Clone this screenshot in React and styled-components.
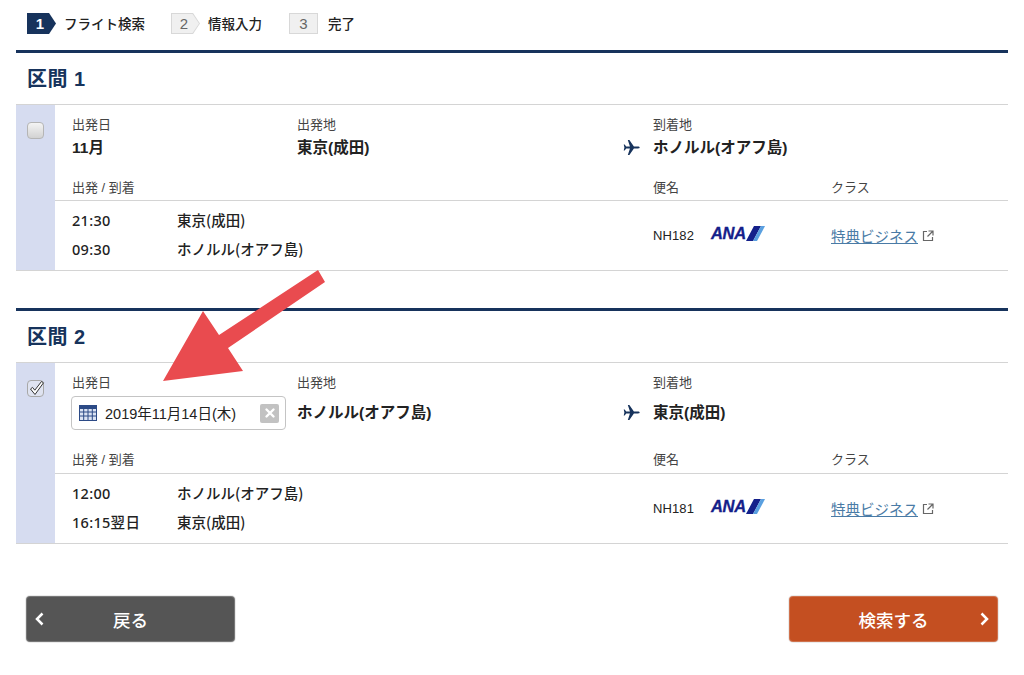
import React from 'react';
import styled, {createGlobalStyle} from 'styled-components';

const NAVY = '#17335c';

const GlobalStyle = createGlobalStyle`
    html, body {
        margin: 0;
        padding: 0;
        background: #fff;
    }
    body {
        font-family: "Liberation Sans", "Noto Sans CJK JP", sans-serif;
        color: #222;
    }
`;

const sections = [
    {
        id: 1,
        title: '区間 1',
        checked: false,
        origin: '東京(成田)',
        destination: 'ホノルル(オアフ島)',
        legs: [['21:30', '東京(成田)'], ['09:30', 'ホノルル(オアフ島)']],
        flight: 'NH182'
    },
    {
        id: 2,
        title: '区間 2',
        checked: true,
        origin: 'ホノルル(オアフ島)',
        destination: '東京(成田)',
        legs: [['12:00', 'ホノルル(オアフ島)'], ['16:15翌日', '東京(成田)']],
        flight: 'NH181'
    }
];

const PlaneIcon = () => (
    <PlaneSvg viewBox="0 0 24 24">
        <path d="M23.500 12c0-.9-1.200-1.300-2.200-1.300h-5.900L9 1.500H6.800l3 9.200H4.500L2.300 7.800H1L2 12l-1 4.200h1.300l2.200-2.900h5.300l-3 9.200H9l6.400-9.200h5.900c1 0 2.200-.4 2.200-1.300z"/>
    </PlaneSvg>
);

const AnaLogo = () => (
    <LogoWrap>
        <LogoText>ANA</LogoText>
        <svg width="19" height="15" viewBox="0 0 19 15">
            <polygon points="0,15 8,0 15,0 7,15" fill="#14208a"/>
            <polygon points="7,15 15,0 19,0 11,15" fill="#5aa0e0"/>
        </svg>
    </LogoWrap>
);

const ClassLink = () => (
    <LinkWrap>
        <FareLink>特典ビジネス</FareLink>
        <svg width="12" height="12" viewBox="0 0 12 12" fill="none" stroke="#666" strokeWidth="1.200">
            <path d="M5 1.500H1.500v9h9V7"/>
            <path d="M6.500 1H11v4.500M11 1L5.500 6.500"/>
        </svg>
    </LinkWrap>
);

const DateField = () => (
    <DateBox>
        <svg width="18" height="16" viewBox="0 0 18 16" fill="none" stroke="#2c4a86" strokeWidth="1">
            <rect x=".5" y=".5" width="17" height="15" fill="#dbe3f3"/>
            <rect x=".5" y=".5" width="17" height="3" fill="#2c4a86"/>
            <path d="M4.700 3v12M9 3v12M13.300 3v12M1 7h16M1 11h16"/>
        </svg>
        <DateText>2019年11月14日(木)</DateText>
        <ClearButton>
            <svg width="12" height="12" viewBox="0 0 12 12" stroke="#fff" strokeWidth="2.400" strokeLinecap="round">
                <path d="M2.500 2.500l7 7M9.500 2.500l-7 7"/>
            </svg>
        </ClearButton>
    </DateBox>
);

const Section = ({data}) => (
    <SectionRoot>
        <SectionTitle>{data.title}</SectionTitle>
        <Table>
            <CheckColumn>
                <CheckBox $checked={data.checked}>
                    {data.checked && (
                        <svg width="19" height="19" viewBox="0 0 19 19" fill="#fff" stroke="#333" strokeWidth="1">
                            <path d="M3.500 10l2-1.600 2.300 2.800L14.500 2.500l2 1.300L8 15.500z"/>
                        </svg>
                    )}
                </CheckBox>
            </CheckColumn>
            <Body>
                <SummaryGrid $tall={data.checked}>
                    <div>
                        <Label>出発日</Label>
                        {data.checked ? <DateField/> : <Value>11月</Value>}
                    </div>
                    <RouteCell>
                        <div>
                            <Label>出発地</Label>
                            <Value $tall={data.checked}>{data.origin}</Value>
                        </div>
                        <PlaneIcon/>
                    </RouteCell>
                    <div>
                        <Label>到着地</Label>
                        <Value $tall={data.checked}>{data.destination}</Value>
                    </div>
                </SummaryGrid>
                <HeaderGrid $tall={data.checked}>
                    <Label>出発 / 到着</Label>
                    <Label>便名</Label>
                    <Label>クラス</Label>
                </HeaderGrid>
                <DetailGrid>
                    <Legs>
                        {data.legs.map(([time, place]) => (
                            <Leg key={time}>
                                <LegTime>{time}</LegTime>
                                <span>{place}</span>
                            </Leg>
                        ))}
                    </Legs>
                    <Flight>
                        <span>{data.flight}</span>
                        <AnaLogo/>
                    </Flight>
                    <ClassLink/>
                </DetailGrid>
            </Body>
        </Table>
    </SectionRoot>
);

const App = () => (
    <Page>
        <GlobalStyle/>
        <Steps>
            <Step>
                <StepBadge $active>1</StepBadge>
                <StepLabel>フライト検索</StepLabel>
            </Step>
            <Step>
                <StepBadge>2</StepBadge>
                <StepLabel>情報入力</StepLabel>
            </Step>
            <Step>
                <StepBadge $last>3</StepBadge>
                <StepLabel>完了</StepLabel>
            </Step>
        </Steps>
        {sections.map(s => <Section key={s.id} data={s}/>)}
        <Actions>
            <ActionButton $color="#555555">
                <Chevron $left viewBox="0 0 10 14"><path d="M7.500 1.500L2 7l5.500 5.500"/></Chevron>
                戻る
            </ActionButton>
            <ActionButton $color="#c44f21">
                検索する
                <Chevron viewBox="0 0 10 14"><path d="M2.500 1.500L8 7l-5.500 5.500"/></Chevron>
            </ActionButton>
        </Actions>
        <ArrowOverlay width="1024" height="675" viewBox="0 0 1024 675">
            <polygon points="318,270 325,282 228,348 243,371 163,381 203,311 219,335" fill="#e94b4f"/>
        </ArrowOverlay>
    </Page>
);

export default App;

const Page = styled.div`
    position: relative;
    width: 1024px;
    height: 675px;
    padding: 0 16px;
    box-sizing: border-box;
    overflow: hidden;
`;

const Steps = styled.div`
    height: 50px;
    padding: 13px 0 0 11px;
    box-sizing: border-box;
    display: flex;
    align-items: flex-start;
    gap: 26px;
`;

const Step = styled.div`
    display: flex;
    align-items: center;
    height: 21px;
`;

const StepBadge = styled.div`
    position: relative;
    isolation: isolate;
    width: 29px;
    height: 21px;
    box-sizing: border-box;
    margin-left: ${props => props.$last ? '1px' : '0'};
    margin-right: ${props => props.$last ? '10px' : '8px'};
    display: flex;
    align-items: center;
    justify-content: center;
    padding-right: ${props => props.$last ? '0' : '3px'};
    font-size: 15px;
    font-weight: ${props => props.$active ? 700 : 400};
    color: ${props => props.$active ? '#fff' : '#666'};
    background: ${props => props.$active ? NAVY : '#d8d8d8'};
    clip-path: ${props => props.$last ? 'none' : 'polygon(0 0, 76% 0, 100% 50%, 76% 100%, 0 100%)'};

    &::before {
        content: '';
        position: absolute;
        inset: 1px;
        z-index: -1;
        background: ${props => props.$active ? NAVY : '#f0f0f0'};
        clip-path: ${props => props.$last ? 'none' : 'polygon(0 0, 76% 0, 100% 50%, 76% 100%, 0 100%)'};
    }
`;

const StepLabel = styled.span`
    margin-top: -2px;
    font-size: 13.500px;
    font-weight: 500;
    color: #222;
`;

const SectionRoot = styled.section`
    border-top: 3px solid ${NAVY};
    margin-bottom: 37px;
`;

const SectionTitle = styled.h2`
    margin: 0;
    height: 51px;
    padding-left: 11px;
    line-height: 52px;
    font-size: 20px;
    font-weight: 700;
    color: ${NAVY};
    letter-spacing: .5px;
`;

const Table = styled.div`
    display: flex;
    border-top: 1px solid #d4d4d4;
    border-bottom: 1px solid #d4d4d4;
`;

const CheckColumn = styled.div`
    width: 39px;
    flex: none;
    background: #d6dcf0;
    padding: 17px 0 0 11px;
    box-sizing: border-box;
`;

const CheckBox = styled.div`
    width: 17px;
    height: 17px;
    box-sizing: border-box;
    border-radius: 4px;
    border: 1px solid ${props => props.$checked ? '#a8a8a8' : '#b5b5b5'};
    background: ${props => props.$checked ? '#dfe3f0' : 'linear-gradient(#f4f4f4, #d2d2d2)'};
    position: relative;

    svg {
        position: absolute;
        left: -1px;
        top: -2px;
    }
`;

const Body = styled.div`
    flex: 1;
    min-width: 0;
`;

const columns = `
    display: grid;
    grid-template-columns: 225px 356px 178px 1fr;
    padding-left: 17px;
`;

const SummaryGrid = styled.div`
    ${columns}
    align-items: start;
    height: ${props => props.$tall ? '87px' : '73px'};
    padding-top: 12px;
    box-sizing: border-box;
`;

const RouteCell = styled.div`
    display: flex;
    justify-content: space-between;
    align-items: flex-end;
    padding-right: 13px;
`;

const Label = styled.div`
    font-size: 13px;
    line-height: 16px;
    color: #444;
`;

const Value = styled.div`
    margin-top: ${props => props.$tall ? '12px' : '5px'};
    font-size: 15.500px;
    line-height: 20px;
    font-weight: 700;
    color: #222;
`;

const PlaneSvg = styled.svg`
    width: 17px;
    height: 17px;
    fill: ${NAVY};
    margin-bottom: 2px;
`;

const DateBox = styled.div`
    width: 215px;
    height: 34px;
    margin: 5px 0 0 -1px;
    box-sizing: border-box;
    border: 1px solid #c4c4c4;
    border-radius: 4px;
    display: flex;
    align-items: center;
    padding: 0 6px 0 7px;
`;

const DateText = styled.span`
    flex: 1;
    margin: -2px 0 0 8px;
    font-size: 14.500px;
    color: #222;
`;

const ClearButton = styled.span`
    width: 19px;
    height: 19px;
    border-radius: 2px;
    background: #c2c2c2;
    display: flex;
    align-items: center;
    justify-content: center;
`;

const HeaderGrid = styled.div`
    ${columns}
    grid-template-columns: 581px 178px 1fr;
    height: ${props => props.$tall ? '24px' : '23px'};
    padding-top: 2px;
    box-sizing: border-box;
    border-bottom: 1px solid #d4d4d4;
`;

const DetailGrid = styled.div`
    ${columns}
    grid-template-columns: 581px 178px 1fr;
    height: 69px;
    align-items: center;
`;

const Legs = styled.div`
    display: flex;
    flex-direction: column;
    gap: 9px;
    padding-bottom: 2px;
`;

const Leg = styled.div`
    display: flex;
    font-size: 14.500px;
    line-height: 20px;
    font-weight: 500;
    font-family: "Noto Sans CJK JP", sans-serif;
`;

const LegTime = styled.span`
    width: 105px;
    font-family: "Noto Sans", "Noto Sans CJK JP", sans-serif;
    font-size: 14.500px;
    letter-spacing: .3px;
`;

const Flight = styled.div`
    display: flex;
    align-items: center;
    gap: 17px;
    font-size: 13px;
    letter-spacing: .1px;
    color: #222;
`;

const LogoWrap = styled.span`
    display: inline-flex;
    align-items: center;
    margin-top: -4px;
`;

const LogoText = styled.span`
    font-size: 16.500px;
    font-weight: 700;
    font-style: italic;
    color: #14208a;
    letter-spacing: -.3px;
    -webkit-text-stroke: .3px #14208a;
`;

const LinkWrap = styled.div`
    display: flex;
    align-items: center;
    gap: 4px;
`;

const FareLink = styled.a`
    font-size: 14.500px;
    color: #4a7ba6;
    text-decoration: underline;
`;

const Actions = styled.div`
    display: flex;
    justify-content: space-between;
    padding: 15px 10px 0;
`;

const ActionButton = styled.div`
    position: relative;
    width: 209px;
    height: 46px;
    box-sizing: border-box;
    border-radius: 4px;
    border: 1px solid rgba(255, 255, 255, .2);
    background: ${props => props.$color};
    box-shadow: 0 0 0 1px rgba(0, 0, 0, .08);
    color: #fff;
    font-size: 17.500px;
    font-weight: 500;
    display: flex;
    align-items: center;
    justify-content: center;
`;

const Chevron = styled.svg`
    position: absolute;
    ${props => props.$left ? 'left: 8px;' : 'right: 8px;'}
    top: 15px;
    width: 10px;
    height: 14px;
    fill: none;
    stroke: #fff;
    stroke-width: 2.500;
`;

const ArrowOverlay = styled.svg`
    position: absolute;
    left: 0;
    top: 0;
    pointer-events: none;
`;
